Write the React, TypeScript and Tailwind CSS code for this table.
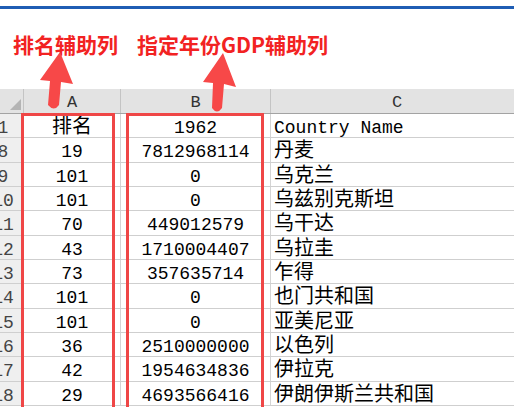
const rows: [string, string, string, string][] = [
  ["1", "排名", "1962", "Country Name"],
  ["8", "19", "7812968114", "丹麦"],
  ["9", "101", "0", "乌克兰"],
  ["10", "101", "0", "乌兹别克斯坦"],
  ["11", "70", "449012579", "乌干达"],
  ["12", "43", "1710004407", "乌拉圭"],
  ["13", "73", "357635714", "乍得"],
  ["14", "101", "0", "也门共和国"],
  ["15", "101", "0", "亚美尼亚"],
  ["16", "36", "2510000000", "以色列"],
  ["17", "42", "1954634836", "伊拉克"],
  ["18", "29", "4693566416", "伊朗伊斯兰共和国"],
]

const cellFont = "font-['Liberation_Mono','Noto_Sans_CJK_SC',monospace] text-[18px]"

// CJK cells in the sheet render a bit wider than the latin ones
const isCjk = (s: string) => /[^\x00-\x7f]/.test(s)

export default function App() {
  return (
    <div className="relative w-[514px] h-[407px] overflow-hidden bg-white">
      {/* ribbon edge */}
      <div className="pt-[6px]">
        <div className="h-[3px] bg-[#1f5db4]" />
      </div>

      {/* callout labels */}
      <div className="h-[80px] pl-[13px] pt-[24px] flex gap-[19px] font-['Noto_Sans_CJK_SC',sans-serif] font-bold text-[21px] leading-[22px] text-[#f22222]">
        <span>排名辅助列</span>
        <span>指定年份GDP辅助列</span>
      </div>

      {/* sheet */}
      <div className={cellFont}>
        {/* column header */}
        <div className="flex h-[25px] bg-[#e3e3e3] border-b border-[#a3a3a3] text-[#333] text-[17px] leading-[24px]">
          <div className="relative w-[24px] shrink-0 border-r border-[#c4c4c4]">
            <svg className="absolute right-[2px] bottom-[3px]" width="11" height="11" viewBox="0 0 11 11">
              <path d="M11 0 L11 11 L0 11 Z" fill="#b4b4b4" />
            </svg>
          </div>
          <div className="w-[97px] shrink-0 text-center border-r border-[#c4c4c4] pt-[2px]">A</div>
          <div className="w-[150px] shrink-0 text-center border-r border-[#c4c4c4] pt-[2px]">B</div>
          <div className="w-[252px] shrink-0 text-center pt-[2px]">C</div>
        </div>

        {rows.map(([n, a, b, c], i) => (
          <div
            key={n}
            className={`flex border-b border-[#cfcfcf] leading-[23px] ${i % 3 === 1 ? "h-[25px]" : "h-[24px]"}`}
          >
            <div className="w-[24px] shrink-0 overflow-hidden bg-[#efefef] border-r border-[#c4c4c4] text-[#444]">
              <div className="w-[42px] -ml-[18px] text-center pt-[3px]">{n}</div>
            </div>
            <div
              className={`w-[97px] shrink-0 text-center border-r border-[#d4d4d4] ${isCjk(a) ? "text-[20px] pt-[2px]" : "pt-[3px]"}`}
            >
              {a}
            </div>
            <div className="w-[150px] shrink-0 text-center border-r border-[#d4d4d4] pt-[3px]">{b}</div>
            <div
              className={`w-[252px] shrink-0 pl-[3px] whitespace-nowrap ${isCjk(c) ? "text-[20px] pt-[2px]" : "pt-[3px]"}`}
            >
              {c}
            </div>
          </div>
        ))}
      </div>

      {/* highlight boxes */}
      <div className="absolute left-[21px] top-[113px] w-[94px] h-[320px] border-[3px] border-[#ef4646]" />
      <div className="absolute left-[126px] top-[113px] w-[138px] h-[320px] border-[3px] border-[#ef4646]" />

      {/* arrows */}
      <svg className="absolute left-0 top-0" width="514" height="130" viewBox="0 0 514 130">
        <path d="M60 52 L73 84 L61 82 L59 105 Q54 112 48 105 L50 81 L40 80 Z" fill="#f74848" />
        <path d="M223 53 L236 87 L224 84 L222 108 Q217 115 212 108 L213 83 L203 82 Z" fill="#f74848" />
      </svg>
    </div>
  )
}
